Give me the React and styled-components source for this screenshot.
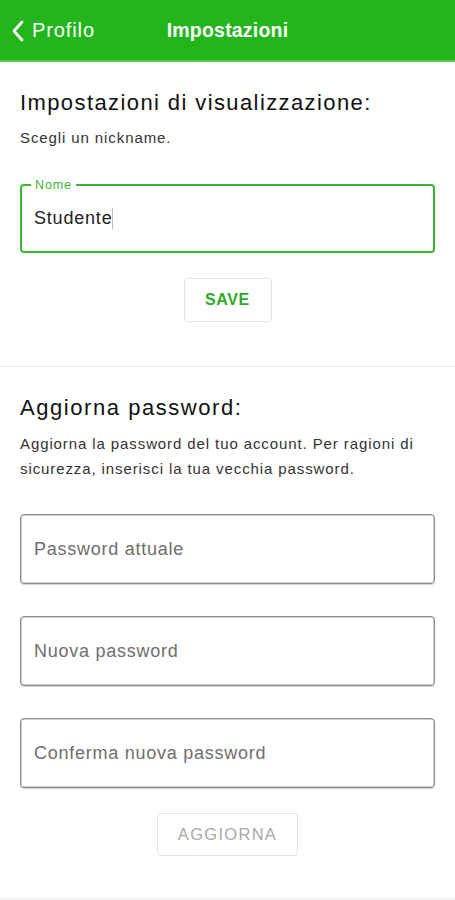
import React from "react";
import styled, { createGlobalStyle } from "styled-components";

const Global = createGlobalStyle`
  html, body { margin: 0; padding: 0; background: #fff; }
  body { font-family: "Liberation Sans", Arial, sans-serif; color: #111; }
  * { box-sizing: border-box; }
`;

const Page = styled.div`
  width: 455px;
  min-height: 900px;
  display: flex;
  flex-direction: column;
  background: #fff;
  border-bottom: 2px solid #f2f2f2;
`;

const Header = styled.header`
  height: 62px;
  background: #22b51c;
  border-bottom: 2px solid #52c94c;
  display: grid;
  grid-template-columns: 1fr auto 1fr;
  align-items: center;
  color: #fff;
`;

const Back = styled.div`
  display: flex;
  align-items: center;
  gap: 8px;
  padding-left: 11px;
  font-size: 20px;
  letter-spacing: 0.9px;
  padding-top: 1px;
`;

const Title = styled.div`
  font-size: 19.5px;
  font-weight: 700;
  letter-spacing: 0.2px;
  padding-top: 1px;
`;

const Section = styled.section`
  display: flex;
  flex-direction: column;
  padding: ${(p) => p.$pad};
  border-bottom: ${(p) => (p.$divider ? "1px solid #ececec" : "none")};
`;

const H2 = styled.h2`
  margin: 0;
  font-size: 22px;
  line-height: 26px;
  font-weight: 400;
  color: #111;
  letter-spacing: ${(p) => p.$ls || "1.4px"};
`;

const Sub = styled.p`
  margin: ${(p) => p.$margin};
  font-size: 15px;
  line-height: ${(p) => p.$lh || "18px"};
  letter-spacing: 0.9px;
  color: #333;
`;

const Outlined = styled.div`
  position: relative;
  height: 69px;
  border: 2px solid #3bb534;
  border-radius: 4px;
  display: flex;
  align-items: center;
  padding-left: 12px;
  font-size: 18px;
  letter-spacing: 0.8px;
  color: #222;
`;

const FloatLabel = styled.span`
  position: absolute;
  top: -8px;
  left: 9px;
  padding: 0 4px;
  background: #fff;
  font-size: 12.5px;
  line-height: 14px;
  letter-spacing: 0.9px;
  color: #3bb534;
`;

const Caret = styled.span`
  display: inline-block;
  width: 1px;
  height: 21px;
  background: #bbb;
  margin-left: 0;
`;

const Field = styled.div`
  height: 70px;
  border: 1px solid #8c8c8c;
  border-radius: 4px;
  box-shadow: 0 1px 1px rgba(0, 0, 0, 0.18), inset 0 0 0 0.5px #a0a0a0;
  display: flex;
  align-items: center;
  padding-left: 13px;
  font-size: 18px;
  letter-spacing: 0.75px;
  color: #6e6e6e;
`;

const Fields = styled.div`
  display: flex;
  flex-direction: column;
  gap: 32px;
  margin-top: 33px;
`;

const Button = styled.div`
  align-self: center;
  width: ${(p) => p.$w}px;
  height: ${(p) => p.$h}px;
  margin-top: 25px;
  border: 1px solid #e2e2e2;
  border-radius: 4px;
  display: flex;
  align-items: center;
  justify-content: center;
  font-size: ${(p) => p.$fs}px;
  font-weight: ${(p) => p.$fw};
  letter-spacing: ${(p) => p.$ls}px;
  color: ${(p) => p.$color};
`;

export default function App() {
  return (
    <Page>
      <Global />
      <Header>
        <Back>
          <svg width="13" height="22" viewBox="0 0 13 22">
            <path d="M11 2 L3 11 L11 20" fill="none" stroke="#fff" strokeWidth="2.8" strokeLinecap="round" strokeLinejoin="round" />
          </svg>
          Profilo
        </Back>
        <Title>Impostazioni</Title>
        <div />
      </Header>

      <Section $pad="28px 20px 44px" $divider>
        <H2>Impostazioni di visualizzazione:</H2>
        <Sub $margin="13px 0 37px">Scegli un nickname.</Sub>
        <Outlined>
          <FloatLabel>Nome</FloatLabel>
          Studente
          <Caret />
        </Outlined>
        <Button $w={88} $h={44} $fs={16} $fw={700} $ls={0.6} $color="#2eaa28">SAVE</Button>
      </Section>

      <Section $pad="28px 20px 42px">
        <H2 $ls="1.55px">Aggiorna password:</H2>
        <Sub $margin="10px 0 0" $lh="25px">
          Aggiorna la password del tuo account. Per ragioni di sicurezza, inserisci la tua vecchia password.
        </Sub>
        <Fields>
          <Field>Password attuale</Field>
          <Field>Nuova password</Field>
          <Field>Conferma nuova password</Field>
        </Fields>
        <Button $w={141} $h={43} $fs={16.5} $fw={400} $ls={1.3} $color="#a9a9a9">AGGIORNA</Button>
      </Section>
    </Page>
  );
}
